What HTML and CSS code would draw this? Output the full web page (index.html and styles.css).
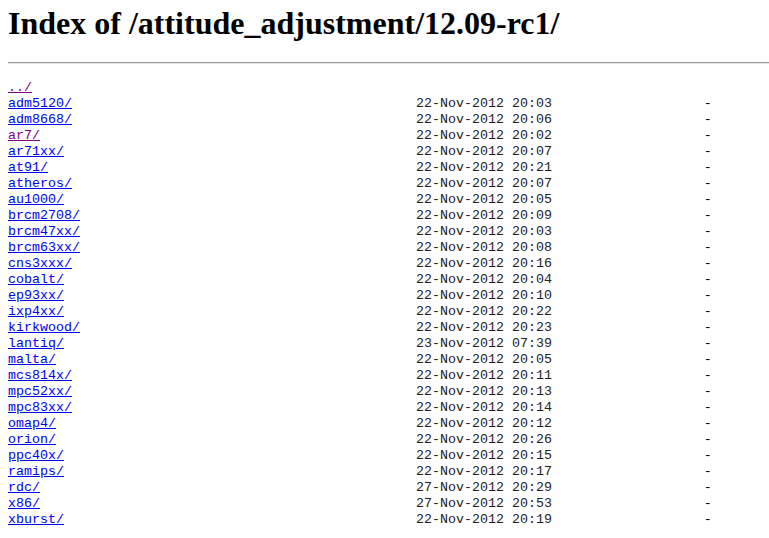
FILE: index.html
```html
<!DOCTYPE html>
<html>
<head>
    <meta charset="UTF-8">
    <title>Index of /attitude_adjustment/12.09-rc1/</title>
    <link rel="stylesheet" href="styles.css">
</head>
<body>
    <h1>Index of /attitude_adjustment/12.09-rc1/</h1>
    <hr>
    <div class="listing">
        <a class="visited" href="../">../</a><span></span><span></span>
        <a href="adm5120/">adm5120/</a><span>22-Nov-2012 20:03</span><span class="size">-</span>
        <a href="adm8668/">adm8668/</a><span>22-Nov-2012 20:06</span><span class="size">-</span>
        <a class="visited" href="ar7/">ar7/</a><span>22-Nov-2012 20:02</span><span class="size">-</span>
        <a href="ar71xx/">ar71xx/</a><span>22-Nov-2012 20:07</span><span class="size">-</span>
        <a href="at91/">at91/</a><span>22-Nov-2012 20:21</span><span class="size">-</span>
        <a href="atheros/">atheros/</a><span>22-Nov-2012 20:07</span><span class="size">-</span>
        <a href="au1000/">au1000/</a><span>22-Nov-2012 20:05</span><span class="size">-</span>
        <a href="brcm2708/">brcm2708/</a><span>22-Nov-2012 20:09</span><span class="size">-</span>
        <a href="brcm47xx/">brcm47xx/</a><span>22-Nov-2012 20:03</span><span class="size">-</span>
        <a href="brcm63xx/">brcm63xx/</a><span>22-Nov-2012 20:08</span><span class="size">-</span>
        <a href="cns3xxx/">cns3xxx/</a><span>22-Nov-2012 20:16</span><span class="size">-</span>
        <a href="cobalt/">cobalt/</a><span>22-Nov-2012 20:04</span><span class="size">-</span>
        <a href="ep93xx/">ep93xx/</a><span>22-Nov-2012 20:10</span><span class="size">-</span>
        <a href="ixp4xx/">ixp4xx/</a><span>22-Nov-2012 20:22</span><span class="size">-</span>
        <a href="kirkwood/">kirkwood/</a><span>22-Nov-2012 20:23</span><span class="size">-</span>
        <a href="lantiq/">lantiq/</a><span>23-Nov-2012 07:39</span><span class="size">-</span>
        <a href="malta/">malta/</a><span>22-Nov-2012 20:05</span><span class="size">-</span>
        <a href="mcs814x/">mcs814x/</a><span>22-Nov-2012 20:11</span><span class="size">-</span>
        <a href="mpc52xx/">mpc52xx/</a><span>22-Nov-2012 20:13</span><span class="size">-</span>
        <a href="mpc83xx/">mpc83xx/</a><span>22-Nov-2012 20:14</span><span class="size">-</span>
        <a href="omap4/">omap4/</a><span>22-Nov-2012 20:12</span><span class="size">-</span>
        <a href="orion/">orion/</a><span>22-Nov-2012 20:26</span><span class="size">-</span>
        <a href="ppc40x/">ppc40x/</a><span>22-Nov-2012 20:15</span><span class="size">-</span>
        <a href="ramips/">ramips/</a><span>22-Nov-2012 20:17</span><span class="size">-</span>
        <a href="rdc/">rdc/</a><span>27-Nov-2012 20:29</span><span class="size">-</span>
        <a href="x86/">x86/</a><span>27-Nov-2012 20:53</span><span class="size">-</span>
        <a href="xburst/">xburst/</a><span>22-Nov-2012 20:19</span><span class="size">-</span>
    </div>
    <hr class="bottom">
</body>
</html>
```

FILE: styles.css
```css
body {
    margin: 5px 0 0 8px;
    background: #fff;
    color: #000;
    font-family: 'Liberation Serif', 'Times New Roman', serif;
}

h1 {
    margin: 0;
    font-size: 32px;
    line-height: 37px;
    font-weight: bold;
}

hr {
    margin: 20px 0 16px;
    height: 0;
    border: 0;
    border-top: 1px solid #9a9a9a;
    border-bottom: 1px solid #e6e6e6;
}

/* directory listing, columns in monospace cells like nginx's pre */
.listing {
    display: grid;
    grid-template-columns: 51ch 17ch 20ch;
    font-family: 'Liberation Mono', 'Courier New', monospace;
    font-size: 13.33px;
    line-height: 16px;
    color: #222;
}

.listing a {
    color: #0000ee;
}

.listing a.visited {
    color: #800080;
}

.size {
    text-align: right;
    color: #000;
}

hr.bottom {
    margin-top: 14px;
}
```
